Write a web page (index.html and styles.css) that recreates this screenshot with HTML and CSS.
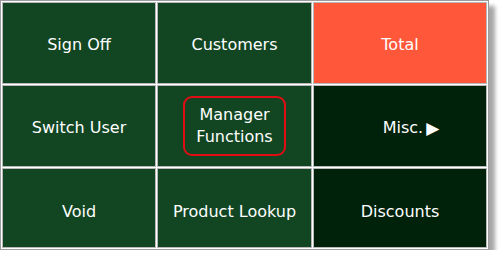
FILE: index.html
```html
<!DOCTYPE html>
<html>
<head>
<meta charset="utf-8">
<link rel="stylesheet" href="styles.css">
</head>
<body>
<div class="panel">
  <div class="cell">Sign Off</div>
  <div class="cell">Customers</div>
  <div class="cell total">Total</div>
  <div class="cell">Switch User</div>
  <div class="cell manager"><span class="highlight">Manager<br>Functions</span></div>
  <div class="cell dark misc">Misc. <span class="arrow">&#9654;</span></div>
  <div class="cell">Void</div>
  <div class="cell">Product Lookup</div>
  <div class="cell dark">Discounts</div>
</div>
</body>
</html>
```
FILE: styles.css
```css
html, body {
  margin: 0;
  padding: 0;
  background: #ffffff;
}
.panel {
  width: 483px;
  height: 244px;
  border: 1px solid #9c9c9c;
  padding: 2px;
  background: #ffffff;
  display: grid;
  grid-template-columns: 152px 153px 172px;
  grid-template-rows: 80px 80px 78px;
  gap: 3px;
  box-shadow: 6px 6px 4px rgba(0, 0, 0, 0.35);
  font-family: "DejaVu Sans", Verdana, sans-serif;
  font-size: 16px;
  color: #ffffff;
}
.cell {
  background: #124623;
  outline: 1px solid rgba(0, 0, 0, 0.28);
  display: flex;
  align-items: center;
  justify-content: center;
  text-align: center;
  line-height: 22px;
  padding-top: 4px;
  box-sizing: border-box;
}
.cell:nth-child(n+7) {
  padding-top: 8px;
}
.cell.manager {
  padding-top: 0;
}
.total {
  background: #fe573a;
}
.dark {
  background: #00220a;
}
.misc {
  padding-left: 22px;
}
.arrow {
  font-size: 17px;
  margin-left: 3px;
}
.highlight {
  display: inline-block;
  border: 2px solid #e10d14;
  border-radius: 9px;
  padding: 6px 11px 6px;
}
```
